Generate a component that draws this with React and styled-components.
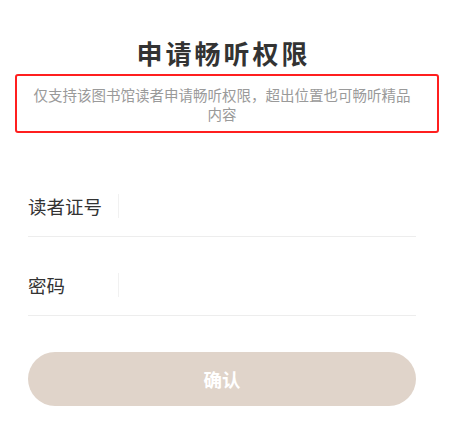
import React from "react";
import styled, { createGlobalStyle } from "styled-components";

const GlobalStyle = createGlobalStyle`
  html, body {
    margin: 0;
    padding: 0;
    background: #ffffff;
  }
  body {
    font-family: "Noto Sans CJK SC", "Noto Sans", sans-serif;
  }
`;

const Page = styled.div`
  width: 457px;
  height: 430px;
  overflow: hidden;
  display: flex;
  flex-direction: column;
  padding-top: 33px;
  box-sizing: border-box;
`;

const Title = styled.h1`
  margin: 0 10px 0 0;
  font-family: "Noto Sans CJK SC", sans-serif;
  font-size: 26px;
  letter-spacing: 3px;
  line-height: 40px;
  font-weight: 700;
  color: #333333;
  text-align: center;
`;

const Highlight = styled.div`
  margin: 1px 18px 0 15px;
  height: 59px;
  box-sizing: border-box;
  border: 2px solid #ff1f1f;
  border-radius: 3px;
  display: flex;
  align-items: center;
  justify-content: center;
  padding: 0 22px 0 12px;
`;

const Subtitle = styled.p`
  margin: 0;
  font-size: 14.5px;
  line-height: 19px;
  color: #9a9a9a;
  text-align: center;
`;

const Form = styled.div`
  display: flex;
  flex-direction: column;
  padding: 25px 41px 0 28px;
`;

const Row = styled.div`
  display: flex;
  align-items: center;
  height: 60px;
  margin-top: 18px;
  border-bottom: 1px solid #ededed;
`;

const Label = styled.span`
  width: 90px;
  font-size: 18.5px;
  color: #333333;
`;

const Divider = styled.span`
  width: 1px;
  height: 24px;
  background: #f1f1f1;
`;

const Input = styled.input`
  flex: 1;
  border: none;
  outline: none;
  background: transparent;
  height: 40px;
  padding: 0 12px;
  font-size: 16px;
`;

const Confirm = styled.button`
  margin: 36px 41px 0 28px;
  height: 54px;
  border: none;
  border-radius: 27px;
  background: #e0d4ca;
  color: #ffffff;
  font-family: "Noto Sans CJK SC", "Noto Sans", sans-serif;
  font-size: 18.5px;
  font-weight: 700;
`;

const fields = ["读者证号", "密码"];

export default function App() {
  return (
    <Page>
      <GlobalStyle />
      <Title>申请畅听权限</Title>
      <Highlight>
        <Subtitle>
          仅支持该图书馆读者申请畅听权限，超出位置也可畅听精品内容
        </Subtitle>
      </Highlight>
      <Form>
        {fields.map((f) => (
          <Row key={f}>
            <Label>{f}</Label>
            <Divider />
            <Input type={f === "密码" ? "password" : "text"} />
          </Row>
        ))}
      </Form>
      <Confirm>确认</Confirm>
    </Page>
  );
}
